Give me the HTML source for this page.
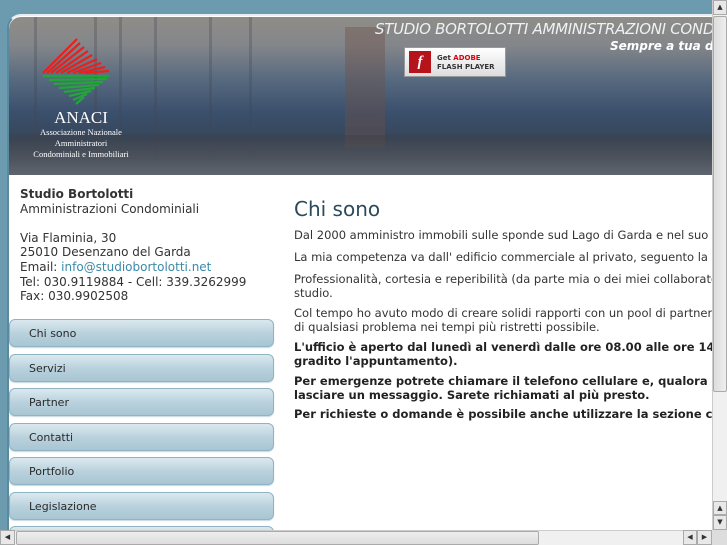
<!DOCTYPE html>
<html><head><meta charset="utf-8"><style>
*{margin:0;padding:0;box-sizing:border-box}
body{width:727px;height:545px;overflow:hidden;position:relative;background:#6c9bb0;font-family:"DejaVu Sans","Liberation Sans",sans-serif;font-size:12px;color:#333}
#box{position:absolute;left:7px;top:14px;width:720px;height:531px;background:#fff;border-top-left-radius:14px;border-left:2px solid #5a8aa0;border-top:2px solid #e6eef2;overflow:hidden}
#hdr{position:absolute;left:0;top:1px;width:720px;height:158px;border-top-left-radius:12px;
background:linear-gradient(180deg,#8f8d88 0%,#83868a 18%,#56697f 40%,#3b506d 60%,#36465a 78%,#46515c 90%,#66717c 100%)}
.mast{position:absolute;top:0;width:3px;height:140px;background:rgba(70,70,80,.3)}
#nav a{position:absolute;left:0;width:265px;height:28px;border-radius:6px;border:1px solid #8fb3c2;
background:linear-gradient(#dbe9ef,#b7d0dc 55%,#a9c6d3);color:#2a2a2a;text-decoration:none;font-size:11px;padding:7px 0 0 19px;box-shadow:0 1px 1px #c6d8e0}
p{margin:0}
.sb{position:absolute;background:#eee;}
</style></head><body>
<div id="box">
 <div id="hdr">
  <div class="mast" style="left:25px"></div><div class="mast" style="left:85px"></div><div class="mast" style="left:110px"></div><div class="mast" style="left:145px"></div><div class="mast" style="left:200px"></div><div class="mast" style="left:240px"></div>
  <div style="position:absolute;left:336px;top:10px;width:40px;height:120px;background:rgba(110,80,70,.4)"></div>
  <div style="position:absolute;left:0;top:118px;width:720px;height:40px;background:linear-gradient(rgba(60,60,65,.4),rgba(90,95,105,.7))"></div>
  <svg style="position:absolute;left:30px;top:20px" width="80" height="75" viewBox="0 0 80 75">
   <g stroke="#e8201e" stroke-width="2.2">
    <line x1="4" y1="36" x2="38" y2="2"/><line x1="8" y1="36" x2="41" y2="6"/><line x1="12" y1="36" x2="45" y2="10"/><line x1="17" y1="36" x2="49" y2="14"/><line x1="22" y1="36" x2="53" y2="18"/><line x1="28" y1="36" x2="58" y2="22"/><line x1="34" y1="36" x2="62" y2="26"/><line x1="40" y1="36" x2="66" y2="30"/><line x1="46" y1="36" x2="70" y2="34"/>
   </g>
   <g stroke="#22a63a" stroke-width="2.2">
    <line x1="4" y1="39" x2="70" y2="39"/><line x1="10" y1="43" x2="68" y2="42"/><line x1="15" y1="47" x2="64" y2="45"/><line x1="20" y1="51" x2="60" y2="48"/><line x1="25" y1="55" x2="56" y2="51"/><line x1="30" y1="59" x2="52" y2="54"/><line x1="34" y1="63" x2="48" y2="57"/><line x1="37" y1="67" x2="45" y2="60"/>
   </g>
  </svg>
  <div style="position:absolute;left:16px;top:92px;width:112px;text-align:center;color:#fff;font-family:'Liberation Serif',serif;line-height:1">
   <div style="font-size:17px">ANACI</div>
   <div style="font-size:8.5px;margin-top:1px;line-height:11px">Associazione Nazionale<br>Amministratori<br>Condominiali e Immobiliari</div>
  </div>
  <div style="position:absolute;left:366px;top:3px;white-space:nowrap;color:#eef2f6;font-style:italic;font-size:15px;font-family:'DejaVu Sans',sans-serif;letter-spacing:-.3px">STUDIO BORTOLOTTI AMMINISTRAZIONI CONDOMINIALI</div>
  <div style="position:absolute;left:601px;top:22px;white-space:nowrap;color:#fff;font-style:italic;font-weight:bold;font-size:12px">Sempre a tua disposizione</div>
  <div style="position:absolute;left:395px;top:30px;width:102px;height:30px;background:linear-gradient(#fff,#ddd);border:1px solid #999">
   <div style="position:absolute;left:4px;top:3px;width:22px;height:22px;background:#b5141a;color:#fff;font-style:italic;font-weight:bold;font-size:15px;text-align:center;line-height:22px;font-family:'Liberation Serif',serif">f</div>
   <div style="position:absolute;left:32px;top:6px;font-size:7px;line-height:9px;color:#333;font-weight:bold">Get <span style="color:#d01">ADOBE</span><br>FLASH PLAYER</div>
  </div>
 </div>
 <div style="position:absolute;left:11px;top:171px;line-height:14.6px;font-size:12px">
  <b>Studio Bortolotti</b><br>Amministrazioni Condominiali<br><br>Via Flaminia, 30<br>25010 Desenzano del Garda<br>Email: <span style="color:#3a8aa8">info@studiobortolotti.net</span><br>Tel: 030.9119884 - Cell: 339.3262999<br>Fax: 030.9902508
 </div>
 <div id="nav">
  <a style="top:303px">Chi sono</a><a style="top:338px">Servizi</a><a style="top:372px">Partner</a><a style="top:407px">Contatti</a><a style="top:441px">Portfolio</a><a style="top:476px">Legislazione</a><a style="top:510px"></a>
 </div>
 <div style="position:absolute;left:285px;top:181px;width:500px;white-space:nowrap;font-size:11.5px;line-height:14px">
  <div style="font-size:20px;color:#2c4a5c;margin-bottom:7px;line-height:24px">Chi sono</div>
  <p style="margin-bottom:8px">Dal 2000 amministro immobili sulle sponde sud Lago di Garda e nel suo entroterra.</p>
  <p style="margin-bottom:8px">La mia competenza va dall' edificio commerciale al privato, seguento la mia clientela.</p>
  <p style="margin-bottom:6px">Professionalità, cortesia e reperibilità (da parte mia o dei miei collaboratori) dello<br>studio.</p>
  <p style="margin-bottom:6px">Col tempo ho avuto modo di creare solidi rapporti con un pool di partner in grado<br>di qualsiasi problema nei tempi più ristretti possibile.</p>
  <p style="margin-bottom:6px;font-weight:bold;color:#222">L'ufficio è aperto dal lunedì al venerdì dalle ore 08.00 alle ore 14.00 (è<br>gradito l'appuntamento).</p>
  <p style="margin-bottom:5px;font-weight:bold;color:#222">Per emergenze potrete chiamare il telefono cellulare e, qualora non<br>lasciare un messaggio. Sarete richiamati al più presto.</p>
  <p style="font-weight:bold;color:#222">Per richieste o domande è possibile anche utilizzare la sezione contatti.</p>
 </div>
</div>
<div class="sb" style="left:712px;top:0;width:15px;height:530px;background:#f0f0f0;border-left:1px solid #ccc"></div>
<div style="position:absolute;left:713px;top:0;width:14px;height:15px;background:#e8e8e8;border:1px solid #aaa;font-size:7px;text-align:center;line-height:13px">▲</div>
<div style="position:absolute;left:713px;top:16px;width:14px;height:376px;background:linear-gradient(90deg,#ddd,#eee);border:1px solid #aaa;border-radius:2px"></div>
<div style="position:absolute;left:713px;top:501px;width:14px;height:14px;background:#e8e8e8;border:1px solid #aaa;font-size:7px;text-align:center;line-height:12px">▲</div>
<div style="position:absolute;left:713px;top:515px;width:14px;height:15px;background:#e8e8e8;border:1px solid #aaa;font-size:7px;text-align:center;line-height:12px">▼</div>
<div class="sb" style="left:0;top:530px;width:712px;height:15px;background:#f0f0f0;border-top:1px solid #ccc"></div>
<div style="position:absolute;left:0;top:530px;width:15px;height:15px;background:#e8e8e8;border:1px solid #aaa;font-size:7px;text-align:center;line-height:13px">◀</div>
<div style="position:absolute;left:16px;top:531px;width:523px;height:14px;background:linear-gradient(#eee,#ddd);border:1px solid #aaa;border-radius:2px"></div>
<div style="position:absolute;left:683px;top:530px;width:14px;height:15px;background:#e8e8e8;border:1px solid #aaa;font-size:7px;text-align:center;line-height:13px">◀</div>
<div style="position:absolute;left:697px;top:530px;width:15px;height:15px;background:#e8e8e8;border:1px solid #aaa;font-size:7px;text-align:center;line-height:13px">▶</div>
<div style="position:absolute;left:712px;top:530px;width:15px;height:15px;background:#ddd"></div>
</body></html>
